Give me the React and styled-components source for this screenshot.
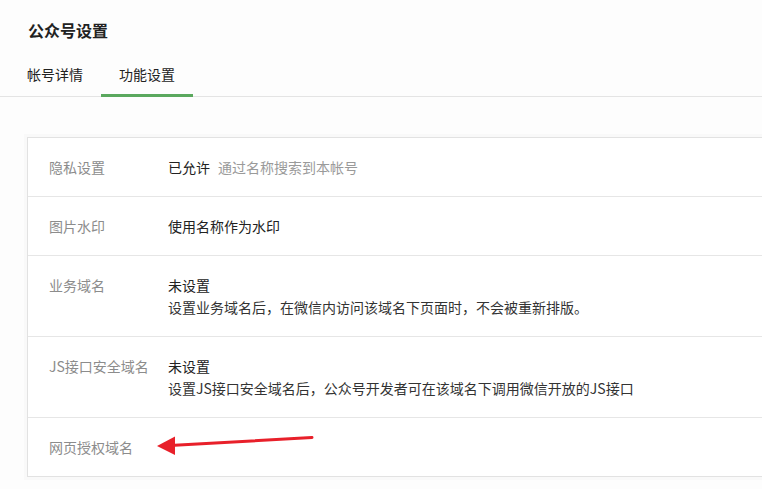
import React from "react";
import styled, { createGlobalStyle } from "styled-components";

const Global = createGlobalStyle`
  html, body {
    margin: 0;
    padding: 0;
    background: #fdfdfd;
    overflow: hidden;
  }
  body {
    font-family: "Noto Sans CJK SC", "Noto Sans", "Liberation Sans", sans-serif;
    color: #222;
  }
`;

const Page = styled.div`
  position: relative;
  width: 762px;
  height: 489px;
  overflow: hidden;
  padding-top: 20px;
  box-sizing: border-box;
`;

const Title = styled.h1`
  margin: 0;
  padding-left: 28px;
  font-size: 16px;
  line-height: 20px;
  font-weight: 700;
  color: #222;
`;

const TabBar = styled.div`
  display: flex;
  margin-top: 24px;
  padding-left: 9px;
  border-bottom: 1px solid #e4e4e4;
`;

const Tab = styled.div`
  padding: 0 18px 10px;
  font-size: 14px;
  line-height: 20px;
  color: #222;
  border-bottom: 3px solid ${(p) => (p.$active ? "#5aa85e" : "transparent")};
  margin-bottom: -1px;
`;

const Card = styled.div`
  margin: 40px 0 0 27px;
  width: 780px;
  background: #fff;
  border: 1px solid #e2e2e2;
  box-shadow: 0 0 0 3px #f9f9f9;
`;

const Row = styled.div`
  display: grid;
  grid-template-columns: 119px 1fr;
  padding: 18px 0 18px 21px;
  font-size: 14px;
  line-height: 22px;
  border-bottom: 1px solid #e6e6e6;
  &:last-child {
    border-bottom: none;
  }
`;

const Label = styled.div`
  color: #8c8c8c;
`;

const Value = styled.div`
  color: #222;
`;

const Hint = styled.span`
  color: #9a9a9a;
  margin-left: 8px;
`;

const Desc = styled.div`
  color: #333;
`;

const Arrow = styled.svg`
  position: absolute;
  left: 0;
  top: 0;
  pointer-events: none;
`;

const rows = [
  { label: "隐私设置", value: "已允许", hint: "通过名称搜索到本帐号" },
  { label: "图片水印", value: "使用名称作为水印" },
  {
    label: "业务域名",
    value: "未设置",
    desc: "设置业务域名后，在微信内访问该域名下页面时，不会被重新排版。",
  },
  {
    label: "JS接口安全域名",
    value: "未设置",
    desc: "设置JS接口安全域名后，公众号开发者可在该域名下调用微信开放的JS接口",
  },
  { label: "网页授权域名" },
];

export default function App() {
  return (
    <>
      <Global />
      <Page>
        <Title>公众号设置</Title>
        <TabBar>
          <Tab>帐号详情</Tab>
          <Tab $active>功能设置</Tab>
        </TabBar>
        <Card>
          {rows.map((r) => (
            <Row key={r.label}>
              <Label>{r.label}</Label>
              <div>
                {r.value && (
                  <Value>
                    {r.value}
                    {r.hint && <Hint>{r.hint}</Hint>}
                  </Value>
                )}
                {r.desc && <Desc>{r.desc}</Desc>}
              </div>
            </Row>
          ))}
        </Card>
        <Arrow width="762" height="489" viewBox="0 0 762 489">
          <line x1="312" y1="437.5" x2="170" y2="445.5" stroke="#e8202a" strokeWidth="3" strokeLinecap="round" />
          <polygon points="157,446 175,436.5 175,455" fill="#e8202a" />
        </Arrow>
      </Page>
    </>
  );
}
